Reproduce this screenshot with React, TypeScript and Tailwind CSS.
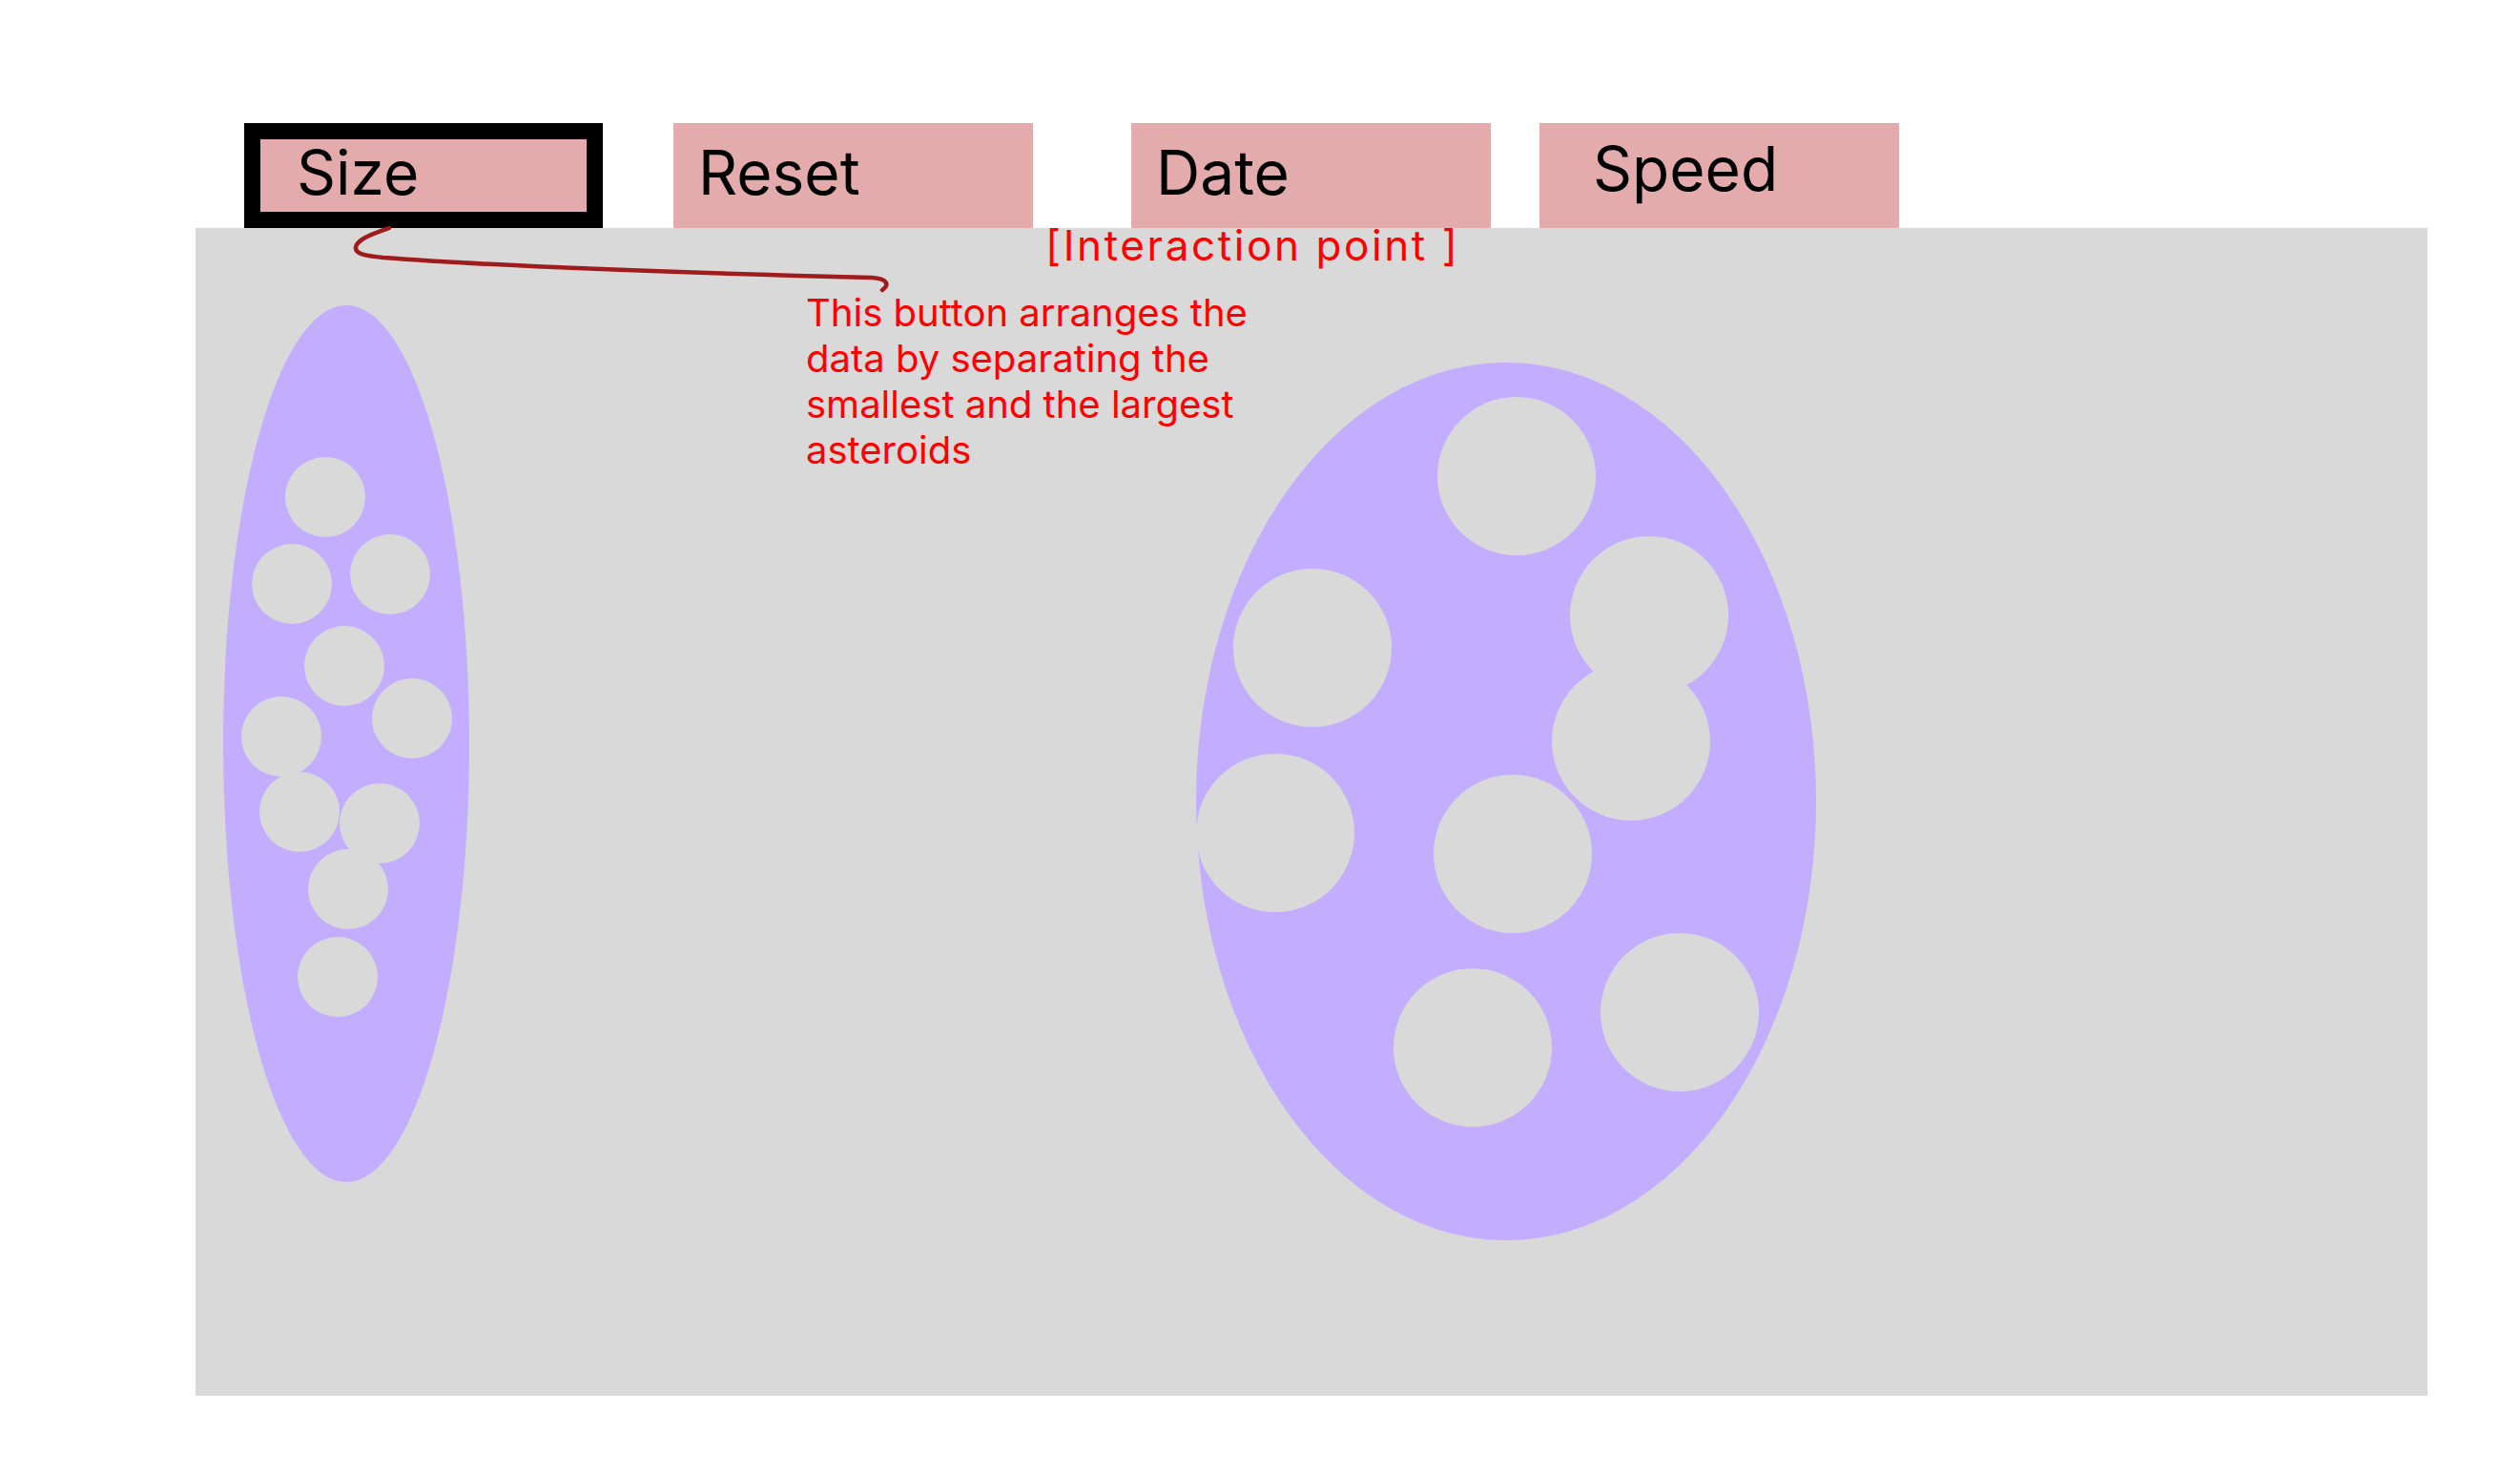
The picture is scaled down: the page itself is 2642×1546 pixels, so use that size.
import React from "react";

type Dot = { x: number; y: number };

// small asteroids, top-left inside the canvas (d = 84)
const smallAsteroids: Dot[] = [
  { x: 94, y: 240 },
  { x: 59, y: 331 },
  { x: 162, y: 321 },
  { x: 114, y: 417 },
  { x: 185, y: 472 },
  { x: 48, y: 491 },
  { x: 67, y: 570 },
  { x: 151, y: 582 },
  { x: 118, y: 651 },
  { x: 107, y: 743 },
];

// large asteroids (d = 166)
const largeAsteroids: Dot[] = [
  { x: 1302, y: 177 },
  { x: 1088, y: 357 },
  { x: 1441, y: 323 },
  { x: 1422, y: 455 },
  { x: 1049, y: 551 },
  { x: 1298, y: 573 },
  { x: 1256, y: 776 },
  { x: 1473, y: 739 },
];

export default function App() {
  return (
    <div className="relative min-h-screen w-full bg-white font-['Inter','Noto_Sans',sans-serif]">
      <div className="flex items-start pl-[256px] pt-[129px]">
        <button
          type="button"
          className="flex h-[110px] w-[376px] items-start border-[17px] border-black bg-[#e3abab] pl-[38px] pt-[3px] text-left text-[64px] leading-[64px] text-black"
        >
          Size
        </button>
        <button
          type="button"
          className="ml-[74px] flex h-[110px] w-[377px] items-start bg-[#e3abab] pl-[26px] pt-[20px] text-left text-[64px] leading-[64px] text-black"
        >
          Reset
        </button>
        <button
          type="button"
          className="ml-[103px] flex h-[110px] w-[377px] items-start bg-[#e3abab] pl-[26px] pt-[20px] text-left text-[64px] leading-[64px] text-black"
        >
          Date
        </button>
        <button
          type="button"
          className="ml-[51px] flex h-[110px] w-[377px] items-start bg-[#e3abab] pl-[56px] pt-[16px] text-left text-[64px] leading-[64px] text-black"
        >
          Speed
        </button>
      </div>

      <div className="relative ml-[205px] h-[1224px] w-[2340px] bg-[#d9d9d9]">
        <div className="absolute left-[29px] top-[81px] h-[919px] w-[258px] rounded-[50%] bg-[#c3adff]" />
        {smallAsteroids.map((d, i) => (
          <div
            key={`s${i}`}
            className="absolute h-[84px] w-[84px] rounded-full bg-[#d9d9d9]"
            style={{ left: d.x, top: d.y }}
          />
        ))}

        <div className="absolute left-[1049px] top-[141px] h-[920px] w-[650px] rounded-[50%] bg-[#c3adff]" />
        {largeAsteroids.map((d, i) => (
          <div
            key={`l${i}`}
            className="absolute h-[166px] w-[166px] rounded-full bg-[#d9d9d9]"
            style={{ left: d.x, top: d.y }}
          />
        ))}
      </div>

      <div className="h-[83px]" />

      {/* annotations */}
      <p className="absolute left-[1096px] top-[235px] whitespace-nowrap text-[44px] leading-[44px] tracking-[2.6px] text-[#ff0000]">
        [Interaction point ]
      </p>
      <p className="absolute left-[845px] top-[304px] whitespace-nowrap text-[40px] leading-[48px] text-[#ff0000]">
        This button arranges the
        <br />
        data by separating the
        <br />
        smallest and the largest
        <br />
        asteroids
      </p>
      <svg
        className="pointer-events-none absolute left-0 top-0"
        width="2642"
        height="1546"
        viewBox="0 0 2642 1546"
        fill="none"
      >
        <path
          d="M408 239 C 392 245, 375 250, 373 259 C 372 266, 382 268, 402 270 C 520 279, 720 286, 914 291 C 930 292, 933 298, 925 304"
          stroke="#a01c1c"
          strokeWidth="4.5"
          strokeLinecap="round"
        />
      </svg>
    </div>
  );
}
